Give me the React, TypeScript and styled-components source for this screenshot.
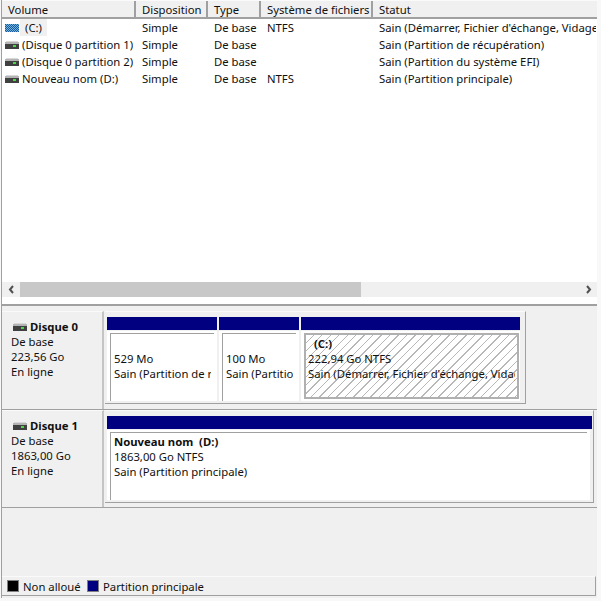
import styled, { createGlobalStyle } from 'styled-components';

const Global = createGlobalStyle`
  html, body { margin: 0; padding: 0; background: #f8f8f8; }
  * { box-sizing: border-box; }
`;

const FONT = '"Noto Sans", "Open Sans", sans-serif';
const NAVY = '#000080';
const LINE = '#a0a0a0';
const COLUMNS = '134px 72px 53px 112px 223px';

const Window = styled.div`
  width: 601px;
  height: 601px;
  padding: 0 4px 3px 0;
  display: flex;
  flex-direction: column;
  font-family: ${FONT};
  font-size: 11.3px;
  line-height: 15px;
  color: #101010;
  overflow: hidden;
`;

const ListPane = styled.div`
  height: 306px;
  flex: none;
  margin-left: 1px;
  background: #ffffff;
  border-left: 1px solid ${LINE};
  border-bottom: 2px solid ${LINE};
  display: flex;
  flex-direction: column;
`;

const Header = styled.div`
  height: 19px;
  flex: none;
  display: grid;
  grid-template-columns: ${COLUMNS};
  background: #f0f0f0;
  border-top: 1px solid #fafafa;
  border-bottom: 2px solid ${LINE};
`;

const HeaderCell = styled.div`
  padding-left: 6px;
  border-right: 2px solid ${LINE};
  line-height: 17px;
  white-space: nowrap;
  overflow: hidden;
  &:last-child { border-right: 0; }
`;

const Rows = styled.div`
  flex: 1;
  overflow: hidden;
`;

const Row = styled.div`
  height: 17px;
  display: grid;
  grid-template-columns: ${COLUMNS};
  align-items: center;
`;

const Cell = styled.div`
  padding-left: 6px;
  white-space: nowrap;
  overflow: hidden;
`;

const VolumeCell = styled.div`
  display: flex;
  align-items: center;
  padding-left: 3px;
  white-space: nowrap;
`;

const VolumeName = styled.span<{ $selected?: boolean }>`
  margin-left: ${({ $selected }) => ($selected ? '0' : '2px')};
  padding: 1px ${({ $selected }) => ($selected ? '5px' : '0')};
  background: ${({ $selected }) => ($selected ? '#f0f0f0' : 'transparent')};
`;

const ScrollBar = styled.div`
  height: 15px;
  margin-bottom: 7px;
  flex: none;
  display: flex;
  align-items: center;
  background: #f0f0f0;
`;

const ScrollArrow = styled.div`
  width: 18px;
  height: 15px;
  flex: none;
  display: flex;
  align-items: center;
  justify-content: center;
`;

const ScrollTrack = styled.div`
  flex: 1;
  height: 15px;
`;

const ScrollThumb = styled.div`
  width: 341px;
  height: 15px;
  background: #c8c8c8;
`;

const GraphPane = styled.div`
  flex: 1;
  margin-left: 1px;
  border-left: 1px solid ${LINE};
  background: #f0f0f0;
  display: flex;
  flex-direction: column;
  padding-top: 5px;
`;

const DiskRow = styled.div<{ $height: number }>`
  height: ${({ $height }) => $height}px;
  flex: none;
  display: flex;
  border-bottom: 1px solid ${LINE};
`;

const DiskLabel = styled.div`
  width: 102px;
  flex: none;
  padding: 7px 0 0 9px;
  border-top: 1px solid #fafafa;
  border-right: 2px solid #c4c4c4;
`;

const DiskTitle = styled.div`
  display: flex;
  align-items: center;
  height: 15px;
  font-weight: 700;
  gap: 2px;
  padding-left: 2px;
`;

const DiskInfo = styled.div`
  height: 15px;
`;

const DiskBody = styled.div<{ $width: number; $end: number }>`
  width: ${({ $width }) => $width}px;
  height: 93px;
  margin-left: 1px;
  flex: none;
  display: flex;
  gap: 2px;
  padding: 5px ${({ $end }) => $end}px 0 2px;
  border-top: 1px solid #fafafa;
  border-right: 1px solid ${LINE};
  border-bottom: 1px solid ${LINE};
`;

const Partition = styled.div<{ $width: number }>`
  width: ${({ $width }) => $width}px;
  flex: none;
  display: flex;
  flex-direction: column;
`;

const PartitionBar = styled.div`
  height: 13px;
  flex: none;
  background: ${NAVY};
`;

const PartitionBox = styled.div<{ $trim?: number }>`
  flex: 1;
  min-height: 0;
  margin: 1px ${({ $trim }) => $trim ?? 0}px 2px 0;
  padding: 2px 3px 0 3px;
  background: #ffffff;
  display: flex;
`;

const PartitionInner = styled.div`
  flex: 1;
  min-width: 0;
  padding: 0 3px 0 3px;
  border-top: 1px solid ${LINE};
  border-left: 1px solid ${LINE};
  background: #ffffff;
`;

const HatchedBox = styled.div`
  flex: 1;
  min-height: 0;
  margin: 1px 0 2px;
  padding: 2px 1px 2px 3px;
  background: #ffffff;
  display: flex;
`;

const HatchedInner = styled.div`
  flex: 1;
  min-width: 0;
  padding: 1px 2px 0 2px;
  border: 2px solid #b0b0b0;
  background: repeating-linear-gradient(135deg, #ffffff 0, #ffffff 5px, #b8b8b8 5px, #b8b8b8 6px);
`;

const PartitionClip = styled.div`
  overflow: hidden;
  white-space: nowrap;
`;

const Spacer = styled.div<{ $height: number }>`
  height: ${({ $height }) => $height}px;
`;

const PartitionName = styled.div<{ $indent?: number }>`
  font-weight: 700;
  padding-left: ${({ $indent }) => $indent ?? 0}px;
`;

const Gap = styled.div`
  flex: 1;
`;

const Legend = styled.div`
  height: 20px;
  flex: none;
  margin: 0 1px 2px 0;
  display: flex;
  align-items: center;
  padding-left: 5px;
  border-top: 1px solid #fafafa;
  border-right: 1px solid ${LINE};
  border-bottom: 1px solid ${LINE};
`;

const Swatch = styled.span<{ $color: string }>`
  width: 12px;
  height: 12px;
  flex: none;
  background: ${({ $color }) => $color};
  border: 1px solid #808080;
`;

const LegendText = styled.span<{ $width: number }>`
  width: ${({ $width }) => $width}px;
  flex: none;
  padding-left: 4px;
  white-space: nowrap;
`;

function DiskIcon() {
  return (
    <svg width="15" height="10" viewBox="0 0 15 10" style={{ flex: 'none' }}>
      <rect x="1" y="1" width="12" height="1" fill="#d8d8d8" />
      <rect x="0" y="2" width="14" height="2" fill="#b4b4b4" />
      <rect x="0" y="4" width="14" height="5" fill="#404040" />
      <rect x="8" y="5" width="3" height="2" fill="#48d848" />
    </svg>
  );
}

function SystemDiskIcon() {
  const cells: { x: number; y: number }[] = [];
  for (let y = 1; y < 9; y++) {
    for (let x = 0; x < 14; x++) {
      if ((x + y) % 2 === 0) cells.push({ x, y });
    }
  }
  return (
    <svg width="15" height="10" viewBox="0 0 15 10" style={{ flex: 'none' }}>
      <rect x="0" y="1" width="14" height="8" fill="#1c5a9c" />
      {cells.map((c) => (
        <rect key={`${c.x}-${c.y}`} x={c.x} y={c.y} width="1" height="1" fill="#6cb4dc" />
      ))}
    </svg>
  );
}

function Chevron({ flip }: { flip?: boolean }) {
  return (
    <svg width="7" height="9" viewBox="0 0 7 9">
      <path
        d={flip ? 'M2 1 L5 4.5 L2 8' : 'M5 1 L2 4.5 L5 8'}
        fill="none"
        stroke="#505050"
        strokeWidth="2"
      />
    </svg>
  );
}

const volumes = [
  { name: '(C:)', fs: 'NTFS', status: "Sain (Démarrer, Fichier d'échange, Vidage", system: true },
  { name: '(Disque 0 partition 1)', fs: '', status: 'Sain (Partition de récupération)' },
  { name: '(Disque 0 partition 2)', fs: '', status: 'Sain (Partition du système EFI)' },
  { name: 'Nouveau nom (D:)', fs: 'NTFS', status: 'Sain (Partition principale)' },
];

export default function App() {
  return (
    <Window>
      <Global />
      <ListPane>
        <Header>
          <HeaderCell>Volume</HeaderCell>
          <HeaderCell>Disposition</HeaderCell>
          <HeaderCell>Type</HeaderCell>
          <HeaderCell>Système de fichiers</HeaderCell>
          <HeaderCell>Statut</HeaderCell>
        </Header>
        <Rows>
          {volumes.map((v) => (
            <Row key={v.name}>
              <VolumeCell>
                {v.system ? <SystemDiskIcon /> : <DiskIcon />}
                <VolumeName $selected={v.system}>{v.name}</VolumeName>
              </VolumeCell>
              <Cell>Simple</Cell>
              <Cell>De base</Cell>
              <Cell>{v.fs}</Cell>
              <Cell>{v.status}</Cell>
            </Row>
          ))}
        </Rows>
        <ScrollBar>
          <ScrollArrow><Chevron /></ScrollArrow>
          <ScrollTrack><ScrollThumb /></ScrollTrack>
          <ScrollArrow><Chevron flip /></ScrollArrow>
        </ScrollBar>
      </ListPane>

      <GraphPane>
        <DiskRow $height={99}>
          <DiskLabel>
            <DiskTitle><DiskIcon />Disque 0</DiskTitle>
            <DiskInfo>De base</DiskInfo>
            <DiskInfo>223,56 Go</DiskInfo>
            <DiskInfo>En ligne</DiskInfo>
          </DiskLabel>
          <DiskBody $width={421} $end={5}>
            <Partition $width={110}>
              <PartitionBar />
              <PartitionBox>
                <PartitionInner>
                  <PartitionClip>
                    <Spacer $height={17} />
                    <div>529 Mo</div>
                    <div>Sain (Partition de récupération)</div>
                  </PartitionClip>
                </PartitionInner>
              </PartitionBox>
            </Partition>
            <Partition $width={80}>
              <PartitionBar />
              <PartitionBox>
                <PartitionInner>
                  <PartitionClip>
                    <Spacer $height={17} />
                    <div>100 Mo</div>
                    <div>Sain (Partition du système EFI)</div>
                  </PartitionClip>
                </PartitionInner>
              </PartitionBox>
            </Partition>
            <Partition $width={219}>
              <PartitionBar />
              <HatchedBox>
                <HatchedInner>
                  <PartitionClip>
                    <PartitionName $indent={6}>(C:)</PartitionName>
                    <div>222,94 Go NTFS</div>
                    <div>Sain (Démarrer, Fichier d'échange, Vidage sur incident)</div>
                  </PartitionClip>
                </HatchedInner>
              </HatchedBox>
            </Partition>
          </DiskBody>
        </DiskRow>
        <DiskRow $height={98}>
          <DiskLabel>
            <DiskTitle><DiskIcon />Disque 1</DiskTitle>
            <DiskInfo>De base</DiskInfo>
            <DiskInfo>1863,00 Go</DiskInfo>
            <DiskInfo>En ligne</DiskInfo>
          </DiskLabel>
          <DiskBody $width={489} $end={1}>
            <Partition $width={485}>
              <PartitionBar />
              <PartitionBox $trim={2}>
                <PartitionInner>
                  <PartitionClip>
                    <Spacer $height={1} />
                    <PartitionName>{'Nouveau nom\u00a0\u00a0(D:)'}</PartitionName>
                    <div>1863,00 Go NTFS</div>
                    <div>Sain (Partition principale)</div>
                  </PartitionClip>
                </PartitionInner>
              </PartitionBox>
            </Partition>
          </DiskBody>
        </DiskRow>
        <Gap />
        <Legend>
          <Swatch $color="#000000" />
          <LegendText $width={68}>Non alloué</LegendText>
          <Swatch $color={NAVY} />
          <LegendText $width={160}>Partition principale</LegendText>
        </Legend>
      </GraphPane>
    </Window>
  );
}
